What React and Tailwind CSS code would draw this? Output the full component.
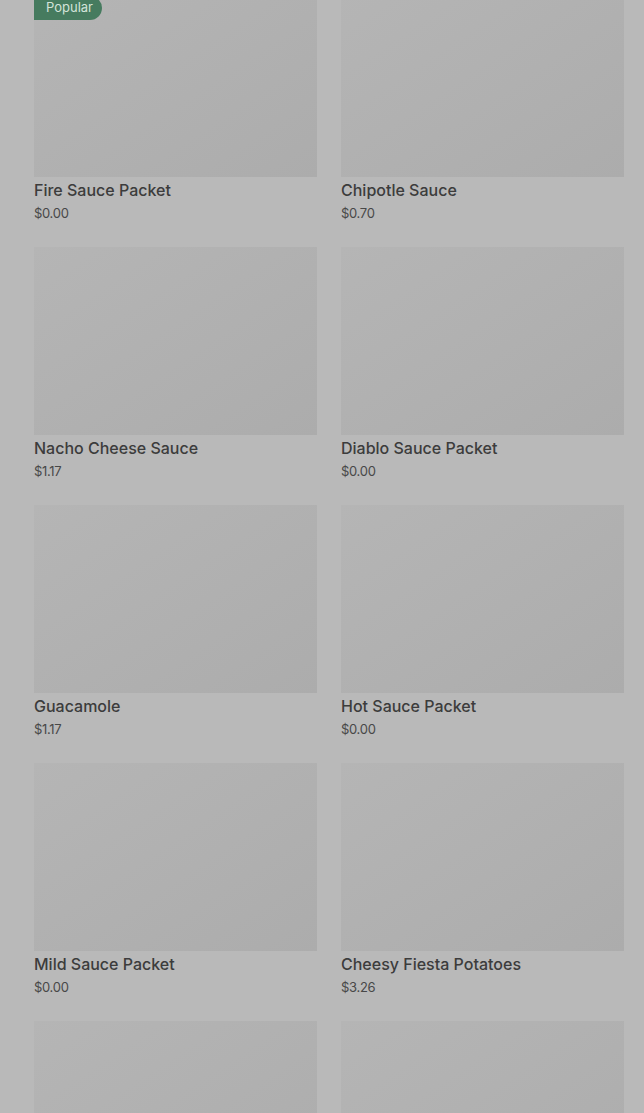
import React from "react";

const items = [
  { name: "Fire Sauce Packet", price: "$0.00", popular: true },
  { name: "Chipotle Sauce", price: "$0.70" },
  { name: "Nacho Cheese Sauce", price: "$1.17" },
  { name: "Diablo Sauce Packet", price: "$0.00" },
  { name: "Guacamole", price: "$1.17" },
  { name: "Hot Sauce Packet", price: "$0.00" },
  { name: "Mild Sauce Packet", price: "$0.00" },
  { name: "Cheesy Fiesta Potatoes", price: "$3.26" },
  // next row only shows its images inside the frame
  { id: "next-1" },
  { id: "next-2" },
];

function ProductCard({ item }) {
  return (
    <div className="flex flex-col">
      <div className="relative h-[188px] bg-gradient-to-br from-[#b5b5b5] to-[#acacac]">
        {item.popular && (
          <span className="absolute left-0 top-[7px] rounded-r-full bg-[#467b5f] pl-3 pr-[9px] h-[24px] flex items-center text-[13px] text-[#d3e3d9]">
            Popular
          </span>
        )}
      </div>
      {item.name && (
        <>
          <div className="h-[26px] leading-[26px] text-[16px] font-medium text-[#3c3c3c]">
            {item.name}
          </div>
          <div className="h-[20px] leading-[20px] text-[13px] text-[#484848] tracking-[-0.3px]">
            {item.price}
          </div>
        </>
      )}
    </div>
  );
}

export default function App() {
  return (
    <div
      className="h-[1113px] bg-[#b9b9b9] overflow-hidden"
      style={{ fontFamily: "Inter, 'Liberation Sans', sans-serif" }}
    >
      <div className="-mt-[11px] pl-[34px] pr-[20px] grid grid-cols-2 gap-x-[24px] gap-y-[24px]">
        {items.map((it) => (
          <ProductCard key={it.name || it.id} item={it} />
        ))}
      </div>
    </div>
  );
}
